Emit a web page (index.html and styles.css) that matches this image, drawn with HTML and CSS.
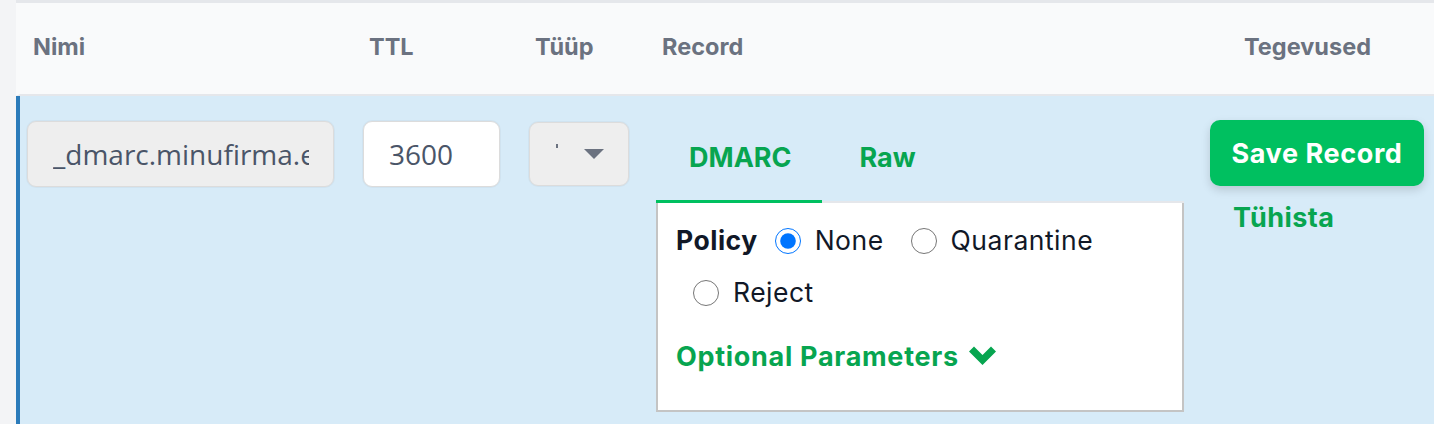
FILE: index.html
```html
<!DOCTYPE html>
<html lang="et">
<head>
    <meta charset="UTF-8">
    <meta name="viewport" content="width=device-width, initial-scale=1.0">
    <title>DNS kirjed</title>
    <link rel="stylesheet" href="styles.css">
</head>
<body>
    <div class="records">
        <div class="thead">
            <div class="th">Nimi</div>
            <div class="th">TTL</div>
            <div class="th">Tüüp</div>
            <div class="th">Record</div>
            <div class="th th-actions">Tegevused</div>
        </div>

        <div class="row editing">
            <div class="cell">
                <input class="field field-name" value="_dmarc.minufirma.ee" readonly>
            </div>
            <div class="cell">
                <input class="field field-ttl" value="3600">
            </div>
            <div class="cell">
                <div class="select">
                    <span class="select-value"></span>
                    <span class="caret"></span>
                </div>
            </div>
            <div class="cell record">
                <div class="tabs">
                    <a class="tab active">DMARC</a>
                    <a class="tab">Raw</a>
                </div>
                <div class="panel">
                    <div class="policy">
                        <span class="policy-label">Policy</span>
                        <label class="choice"><input type="radio" name="policy" checked> None</label>
                        <label class="choice"><input type="radio" name="policy"> Quarantine</label>
                        <label class="choice"><input type="radio" name="policy"> Reject</label>
                    </div>
                    <a class="optional">Optional Parameters
                        <svg class="chevron" viewBox="0 0 27 19" width="27" height="19">
                            <polygon points="0,5.5 5,0.5 13.5,9 22,0.5 27,5.5 13.5,19" fill="currentColor"/>
                        </svg>
                    </a>
                </div>
            </div>
            <div class="cell actions">
                <button class="save">Save Record</button>
                <a class="cancel">Tühista</a>
            </div>
        </div>
    </div>
</body>
</html>
```

FILE: styles.css
```css
body {
    margin: 0;
    height: 424px;
    overflow: hidden;
    background-color: #f3f4f6;
    font-family: Inter, "Liberation Sans", sans-serif;
}
.records {
    margin-left: 16px;
    border-top: 3px solid #e5e7eb;
}
.thead, .row {
    display: grid;
    grid-template-columns: 336px 166px 127px 554px 1fr;
    border-left: 4px solid transparent;
}
.thead {
    background: #f9fafb;
    border-bottom: 2px solid #e5e7eb;
    height: 91px;
}
.th {
    padding: 26px 13px 0;
    font-size: 23.5px;
    line-height: 36px;
    font-weight: 700;
    color: #6b7280;
}
.th-actions {
    padding-left: 41px;
}
.row.editing {
    background: #d7ebf8;
    border-left-color: #2b7bba;
    min-height: 340px;
}
.cell {
    padding: 25px 7px;
}
.field {
    box-sizing: border-box;
    height: 66px;
    padding: 0 24px 0 25px;
    border: 1px solid #dcdcdc;
    border-radius: 9px;
    box-shadow: 0 0 0 1px rgba(0,0,0,0.03);
    font-family: "Open Sans", Lato, sans-serif;
    font-size: 28px;
    color: #4a5568;
    outline: none;
}
.field-name {
    width: 307px;
    background: #eeeeee;
}
.field-ttl {
    width: 137px;
    background: #ffffff;
}
.select {
    box-sizing: border-box;
    width: 100px;
    height: 64px;
    margin-top: 1px;
    background: #eeeeee;
    border: 1px solid #dcdcdc;
    border-radius: 9px;
    box-shadow: 0 0 0 1px rgba(0,0,0,0.03);
    display: flex;
    align-items: center;
    padding-left: 26px;
}
.select-value {
    width: 2px;
    height: 4px;
    background: #6b7280;
    margin-bottom: 16px;
}
.caret {
    margin-left: 26px;
    width: 0;
    height: 0;
    border-left: 10px solid transparent;
    border-right: 10px solid transparent;
    border-top: 10px solid #6b7280;
}
.record {
    display: flex;
    flex-direction: column;
}
.tabs {
    display: flex;
    width: 528px;
    border-bottom: 2px solid #e5e7eb;
}
.tab {
    padding: 17px 32px 23px 38px;
    margin-bottom: -2px;
    border-bottom: 3px solid transparent;
    font-size: 27px;
    line-height: 39px;
    font-weight: 700;
    color: #07a550;
}
.tab.active {
    padding: 17px 30px 23px 33px;
    border-bottom-color: #00c060;
}
.panel {
    box-sizing: border-box;
    width: 528px;
    background: white;
    border: 2px solid #c4c4c4;
    border-top: none;
    padding: 18px 18px 34px;
    font-size: 26.5px;
    letter-spacing: 0.5px;
    color: #111827;
}
.policy {
    display: flex;
    flex-wrap: wrap;
    align-items: center;
    row-gap: 13px;
    line-height: 39px;
}
.policy-label {
    font-weight: 700;
}
.choice {
    display: flex;
    align-items: center;
    margin: 0 10px 0 17px;
}
.choice input {
    width: 26px;
    height: 26px;
    margin: 0 14px 0 0;
    accent-color: #0075ff;
}
.optional {
    display: flex;
    align-items: center;
    margin-top: 25px;
    font-size: 27px;
    letter-spacing: 0.7px;
    line-height: 39px;
    font-weight: 700;
    color: #07a550;
}
.chevron {
    margin-left: 10px;
    margin-top: -3px;
}
.actions {
    display: flex;
    flex-direction: column;
    align-items: flex-start;
    padding-top: 24px;
}
.save {
    width: 214px;
    height: 66px;
    background-color: #00c060;
    color: white;
    border: none;
    border-radius: 10px;
    box-shadow: 0 4px 10px rgba(0,0,0,0.15);
    font-family: Inter, "Liberation Sans", sans-serif;
    font-size: 27px;
    letter-spacing: 0.6px;
    font-weight: 700;
    cursor: pointer;
}
.cancel {
    margin-top: 11px;
    padding-left: 23px;
    font-size: 27px;
    letter-spacing: 0.4px;
    line-height: 42px;
    font-weight: 700;
    color: #07a550;
}
```
